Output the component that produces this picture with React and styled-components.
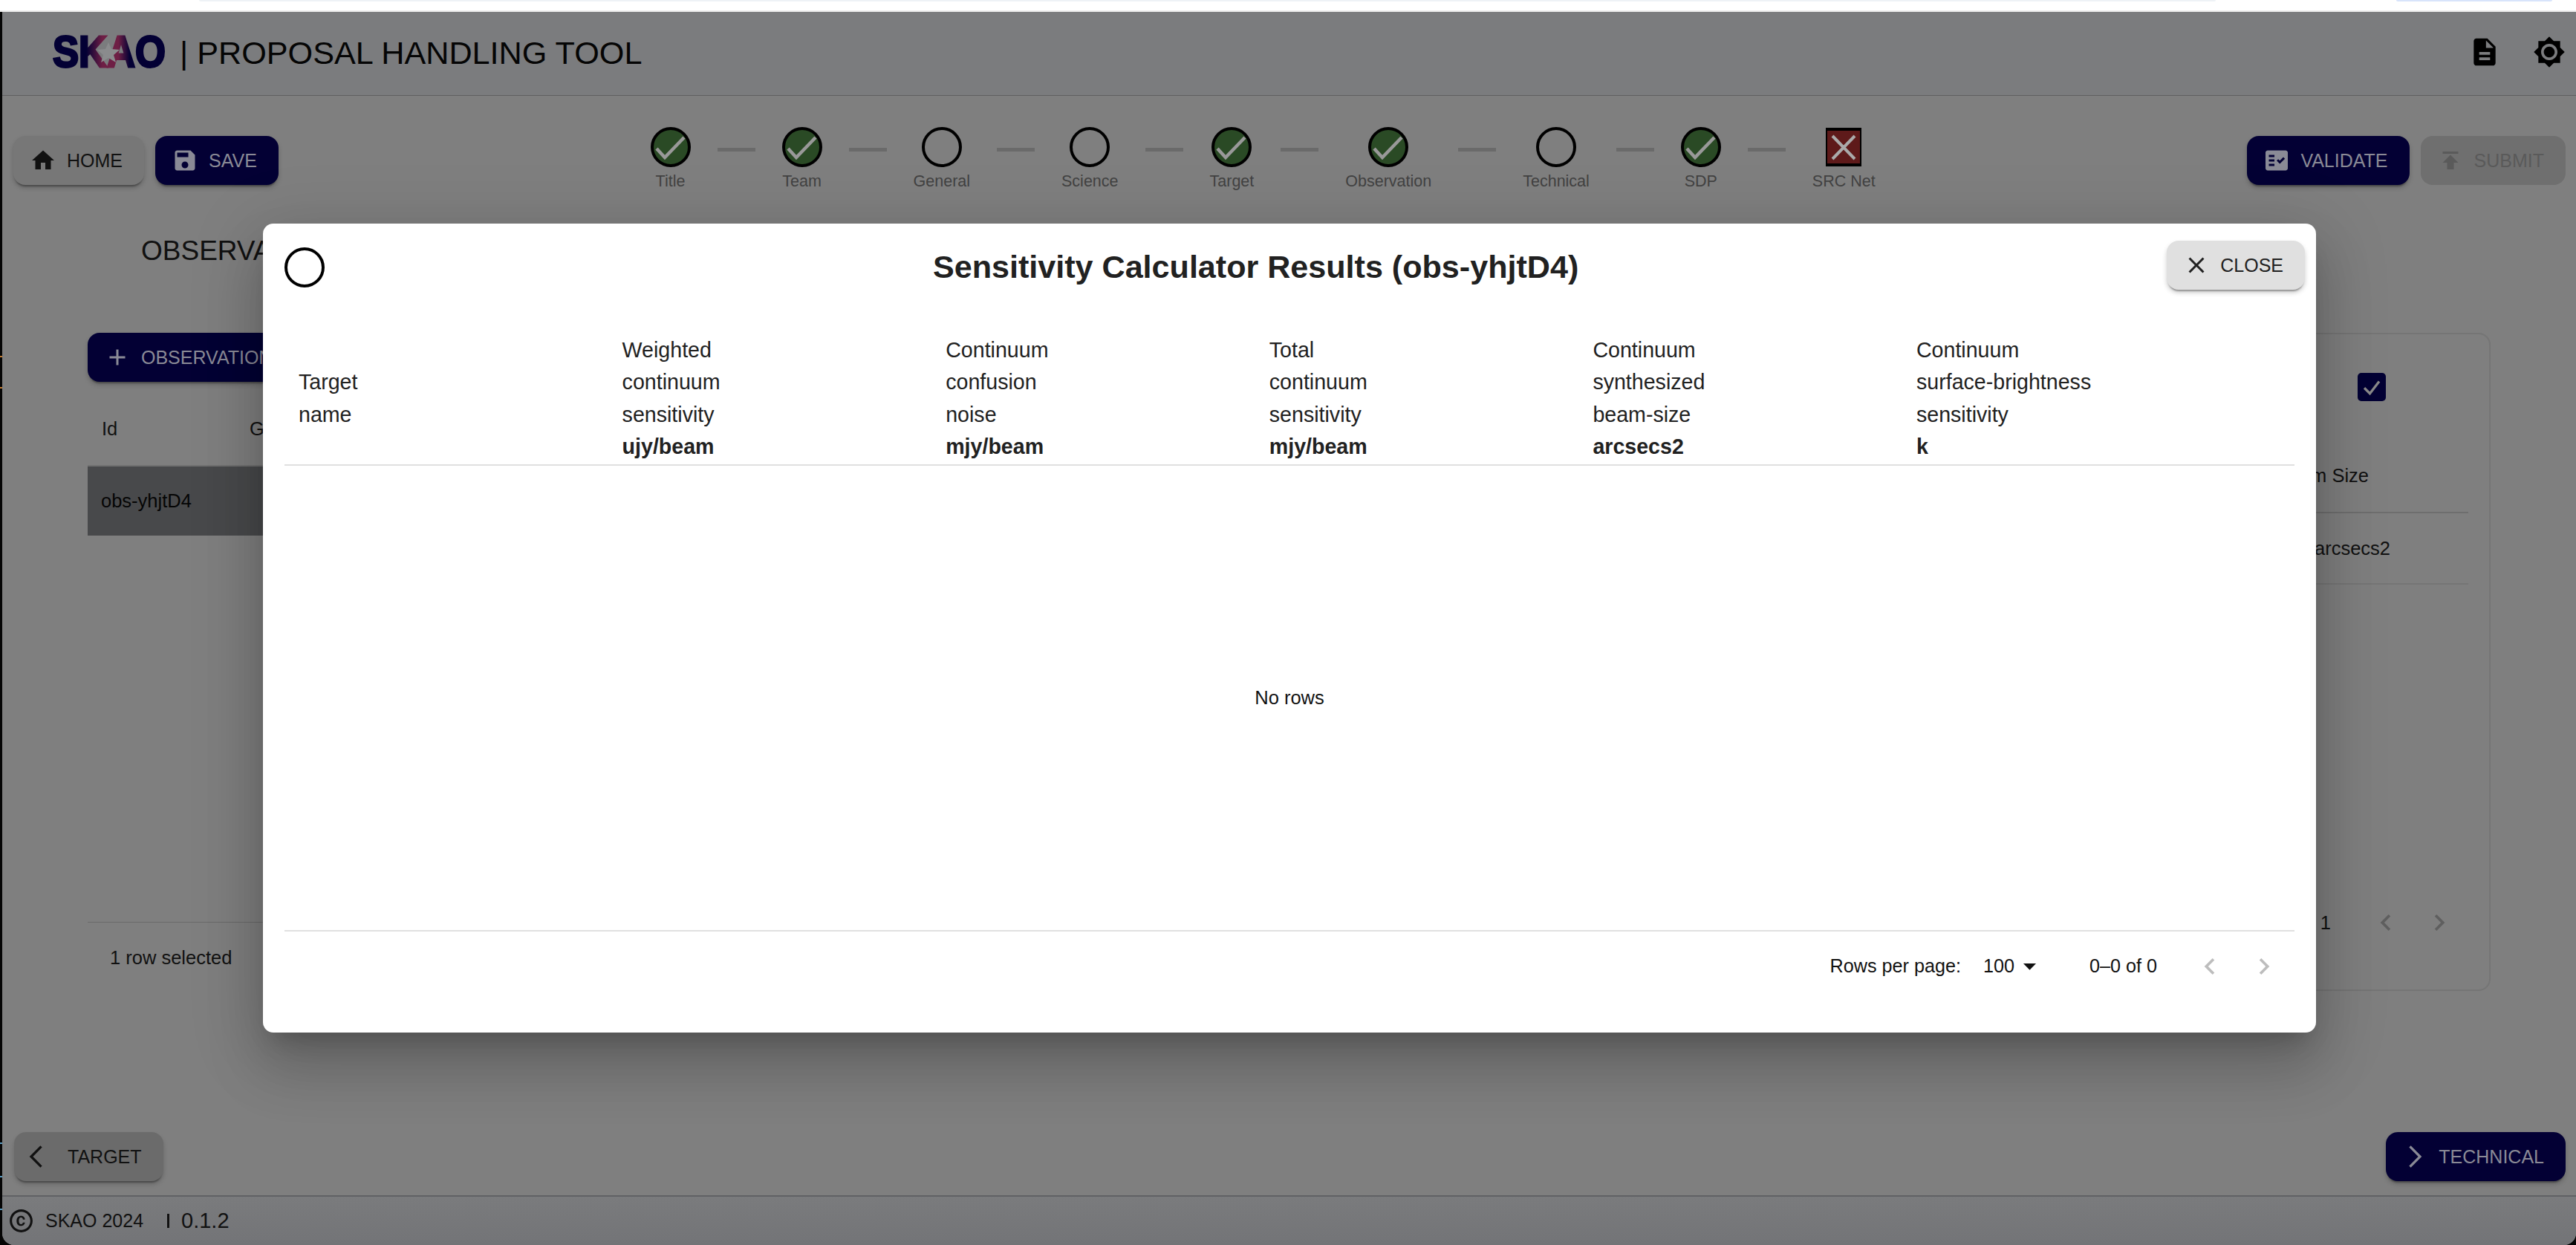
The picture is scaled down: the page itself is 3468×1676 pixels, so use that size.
import React from 'react';
import styled, { createGlobalStyle } from 'styled-components';

const GlobalStyle = createGlobalStyle`
  html, body {
    margin: 0;
    padding: 0;
    background: #000;
  }
  body {
    font-family: "Liberation Sans", Arial, sans-serif;
  }
  * {
    box-sizing: border-box;
  }
`;

const Page = styled.div`
  position: relative;
  width: 3468px;
  height: 1676px;
  display: flex;
  flex-direction: column;
  overflow: hidden;
  background: #050505;
`;

const TopStrip = styled.div`
  flex: none;
  height: 16px;
  display: flex;
  background: #fff;
  border-bottom: 2px solid #ececec;
`;

const TabPill = styled.div`
  height: 2px;
  margin-left: ${({ $offset }) => $offset}px;
  width: ${({ $width }) => $width}px;
  background: ${({ $color }) => $color};
  border-radius: 0 0 4px 4px;
`;

const Desktop = styled.div`
  flex: 1;
  min-height: 0;
  display: flex;
`;

const SideEdge = styled.div`
  flex: none;
  width: 3px;
  display: flex;
  flex-direction: column;
`;

const EdgeTick = styled.div`
  flex: none;
  height: 2px;
  margin-top: ${({ $gap }) => $gap}px;
  background: ${({ $color }) => $color};
`;

const Window = styled.div`
  flex: 1;
  min-width: 0;
  display: flex;
  flex-direction: column;
  background: #7f7f7f;
  border-radius: 0 0 16px 16px;
  overflow: hidden;
`;

const Header = styled.header`
  flex: none;
  height: 113px;
  display: flex;
  align-items: center;
  padding: 0 14px 0 67px;
  background: #7b7c7e;
  border-bottom: 1px solid #5f6061;
`;

const Logo = styled.svg`
  flex: none;
  width: 154px;
  height: 44px;
  margin-top: -6px;
  overflow: visible;
`;

const AppTitle = styled.h1`
  margin: -2px 0 0 18px;
  font-size: 43.2px;
  font-weight: 400;
  line-height: 50px;
  color: #050505;
  white-space: pre;
`;

const HeaderIcons = styled.div`
  margin-left: auto;
  display: flex;
  align-items: center;
  gap: 43px;
  margin-top: -4px;
`;

const Main = styled.main`
  flex: 1;
  min-height: 0;
  display: flex;
  flex-direction: column;
`;

const Toolbar = styled.div`
  flex: none;
  display: flex;
  justify-content: space-between;
  align-items: flex-start;
  padding: 42px 14px 0 15px;
`;

const ButtonGroup = styled.div`
  display: flex;
  gap: 15px;
  margin-top: 12px;
`;

const Button = styled.div`
  flex: none;
  height: 66px;
  display: flex;
  align-items: center;
  gap: ${({ $gap }) => ($gap === undefined ? 14 : $gap)}px;
  padding: 0 29px 0 ${({ $left }) => ($left === undefined ? 22 : $left)}px;
  border-radius: 16px;
  font-size: 25px;
  white-space: nowrap;
  background: ${({ $tone }) => ({
    grey: '#777777',
    dark: '#6b6b6b',
    navy: '#030034',
    light: '#e0e0e0',
    off: '#6f6f6f',
  }[$tone])};
  color: ${({ $tone }) => ({
    grey: '#111111',
    dark: '#111111',
    navy: '#8a8a96',
    light: '#212121',
    off: '#5a5a5a',
  }[$tone])};
  box-shadow: ${({ $tone }) => ($tone === 'off'
    ? 'none'
    : '0 4px 2px -2px rgba(0,0,0,0.3), 0 4px 6px 0 rgba(0,0,0,0.2)')};
`;

const InlineButton = styled(Button)`
  display: inline-flex;
`;

const Stepper = styled.div`
  display: flex;
  align-items: flex-start;
  gap: 36px;
`;

const Step = styled.div`
  display: flex;
  flex-direction: column;
  align-items: center;
`;

const StepLabel = styled.div`
  margin-top: 7px;
  font-size: 21.5px;
  line-height: 25px;
  color: #424242;
`;

const Connector = styled.div`
  flex: none;
  width: 51px;
  height: 5px;
  margin-top: 28px;
  background: #6a6a6a;
`;

const Heading = styled.h2`
  margin: 59px 0 0 187px;
  font-size: 37px;
  font-weight: 400;
  line-height: 44px;
  color: #111;
`;

const Content = styled.div`
  flex: none;
  display: flex;
  justify-content: space-between;
  padding: 88px 115px 0;
`;

const LeftColumn = styled.section`
  width: 2100px;
`;

const DataHead = styled.div`
  height: 81px;
  margin-top: 33px;
  padding-bottom: 18px;
  display: flex;
  align-items: center;
  border-bottom: 2px solid #707070;
  font-size: 25.5px;
  color: #111;
`;

const DataHeadCell = styled.div`
  width: 199px;
  padding-left: 19px;
`;

const DataBody = styled.div`
  height: 614px;
  border-bottom: 1px solid #6a6a6a;
`;

const SelectedRow = styled.div`
  height: 93px;
  padding-left: 18px;
  display: flex;
  align-items: center;
  background: #48494b;
  font-size: 25.5px;
  color: #050505;
`;

const RowCount = styled.div`
  margin-top: 34px;
  padding-left: 30px;
  font-size: 25.5px;
  line-height: 26px;
  color: #111;
`;

const SideCard = styled.section`
  width: 1113px;
  height: 886px;
  padding: 52px 28px 68px;
  display: flex;
  flex-direction: column;
  border: 2px solid #757575;
  border-radius: 16px;
`;

const CheckRow = styled.div`
  display: flex;
  justify-content: flex-end;
  padding-right: 111px;
`;

const Checkbox = styled.div`
  width: 38px;
  height: 38px;
  display: flex;
  align-items: center;
  justify-content: center;
  border-radius: 5px;
  background: #030034;
`;

const CardHead = styled.div`
  height: 151px;
  display: flex;
  align-items: flex-end;
  justify-content: flex-end;
  padding: 0 134px 34px 0;
  border-bottom: 2px solid #6e6e6e;
  font-size: 25.5px;
  line-height: 30px;
  color: #111;
`;

const CardRow = styled.div`
  height: 96px;
  display: flex;
  align-items: center;
  justify-content: flex-end;
  padding-right: 105px;
  border-bottom: 2px solid #757575;
  font-size: 25.5px;
  color: #111;
`;

const CardPager = styled.div`
  margin-top: auto;
  height: 44px;
  display: flex;
  align-items: center;
  justify-content: flex-end;
  gap: 28px;
  padding-right: 17px;
  font-size: 25.5px;
  color: #111;
`;

const PagerCount = styled.span`
  margin-right: 24px;
`;

const NavRow = styled.div`
  margin-top: auto;
  flex: none;
  display: flex;
  justify-content: space-between;
  padding: 0 14px 19px 16px;
`;

const Footer = styled.footer`
  flex: none;
  height: 67px;
  display: flex;
  align-items: center;
  padding-left: 7px;
  background: linear-gradient(#7a7b7d, #737477);
  border-top: 2px solid #606164;
  color: #111;
`;

const Copyright = styled.span`
  margin-left: 14px;
  font-size: 25px;
`;

const Divider = styled.span`
  width: 3px;
  height: 19px;
  margin: 0 16px 0 32px;
  background: #111;
`;

const Version = styled.span`
  font-size: 29px;
`;

const Modal = styled.div`
  position: absolute;
  left: 354px;
  top: 301px;
  width: 2764px;
  height: 1089px;
  display: flex;
  flex-direction: column;
  padding: 0 29px;
  background: #fff;
  border-radius: 14px;
  color: #212121;
  box-shadow: 0 22px 30px -14px rgba(0,0,0,0.2), 0 48px 76px 6px rgba(0,0,0,0.14), 0 18px 92px 16px rgba(0,0,0,0.12);
`;

const ModalHead = styled.div`
  flex: none;
  height: 149px;
  display: flex;
  align-items: flex-start;
  padding-top: 23px;
`;

const StatusRing = styled.div`
  flex: none;
  width: 54px;
  height: 54px;
  margin-top: 9px;
  border: 4px solid #000;
  border-radius: 50%;
`;

const ModalTitle = styled.h2`
  margin: 9px 0 0 819px;
  font-size: 43.1px;
  font-weight: 700;
  line-height: 52px;
  white-space: nowrap;
`;

const CloseSlot = styled.div`
  margin: 0 -14px 0 auto;
`;

const TableHead = styled.div`
  flex: none;
  display: grid;
  grid-template-columns: repeat(6, 435.6px);
  padding-bottom: 1px;
  border-bottom: 2px solid #e0e0e0;
`;

const HeadCell = styled.div`
  align-self: center;
  padding-left: 19px;
  font-size: 28.6px;
  line-height: 43.4px;
`;

const HeadUnit = styled.div`
  font-weight: 700;
`;

const TableBody = styled.div`
  flex: none;
  height: 627px;
  display: flex;
  align-items: center;
  justify-content: center;
  border-bottom: 2px solid #e0e0e0;
  font-size: 25.5px;
  color: #111;
`;

const TablePager = styled.div`
  flex: none;
  height: 94px;
  display: flex;
  align-items: center;
  justify-content: flex-end;
  padding-right: 19px;
  font-size: 25.2px;
  color: #111;
`;

const PageSize = styled.span`
  margin-left: 30px;
`;

const PageRange = styled.span`
  margin: 0 49px 0 60px;
`;

const PageButtons = styled.div`
  display: flex;
  gap: 29px;
`;

const Icon = ({ d, size = 36, color = 'currentColor' }) => (
  <svg width={size} height={size} viewBox="0 0 24 24" fill={color} style={{ flex: 'none' }}>
    <path d={d} />
  </svg>
);

const NavChevron = ({ d, color }) => (
  <svg width="56" height="56" viewBox="0 0 24 24" fill="none" stroke={color} strokeWidth="1.4" style={{ flex: 'none' }}>
    <path d={d} />
  </svg>
);

const paths = {
  home: 'M10 20v-6h4v6h5v-8h3L12 3 2 12h3v8z',
  save: 'M17 3H5c-1.11 0-2 .9-2 2v14c0 1.1.89 2 2 2h14c1.1 0 2-.9 2-2V7l-4-4zm-5 16c-1.66 0-3-1.34-3-3s1.34-3 3-3 3 1.34 3 3-1.34 3-3 3zm3-10H5V5h10v4z',
  factCheck: 'M20 3H4c-1.1 0-2 .9-2 2v14c0 1.1.9 2 2 2h16c1.1 0 2-.9 2-2V5c0-1.1-.9-2-2-2zM10 17H5v-2h5v2zm0-4H5v-2h5v2zm0-4H5V7h5v2zm4.82 6L12 12.16l1.41-1.41 1.41 1.42L17.99 9l1.42 1.42L14.82 15z',
  publish: 'M5 4v2h14V4H5zm0 10h4v6h6v-6h4l-7-7-7 7z',
  close: 'M19 6.41 17.59 5 12 10.59 6.41 5 5 6.41 10.59 12 5 17.59 6.41 19 12 13.41 17.59 19 19 17.59 13.41 12z',
  add: 'M19 13h-6v6h-2v-6H5v-2h6V5h2v6h6v2z',
  left: 'M15.41 7.41 14 6l-6 6 6 6 1.41-1.41L10.83 12z',
  right: 'M10 6 8.59 7.41 13.17 12l-4.58 4.59L10 18l6-6z',
  navLeft: 'M14.8 6.2 9 12l5.8 5.8',
  navRight: 'M9.2 6.2 15 12l-5.8 5.8',
  description: 'M14 2H6c-1.1 0-1.99.9-1.99 2L4 20c0 1.1.89 2 1.99 2H18c1.1 0 2-.9 2-2V8l-6-6zm2 16H8v-2h8v2zm0-4H8v-2h8v2zm-3-5V3.5L18.5 9H13z',
  brightness: 'M20 8.69V4h-4.69L12 .69 8.69 4H4v4.69L.69 12 4 15.31V20h4.69L12 23.31 15.31 20H20v-4.69L23.31 12 20 8.69zM12 18c-3.31 0-6-2.69-6-6s2.69-6 6-6 6 2.69 6 6-2.69 6-6 6zm0-10c-2.21 0-4 1.79-4 4s1.79 4 4 4 4-1.79 4-4-1.79-4-4-4z',
  copyright: 'M11.88 9.14c1.28.06 1.61 1.15 1.63 1.66h1.79c-.08-1.98-1.49-3.19-3.45-3.19C9.64 7.61 8 9 8 12.14c0 1.94.93 4.24 3.84 4.24 2.22 0 3.41-1.65 3.44-2.95h-1.79c-.03.59-.45 1.38-1.63 1.44-1.31-.04-1.86-1.06-1.86-2.73 0-2.89 1.28-2.98 1.88-3zM12 2C6.48 2 2 6.48 2 12s4.48 10 10 10 10-4.48 10-10S17.52 2 12 2zm0 18c-4.41 0-8-3.59-8-8s3.59-8 8-8 8 3.59 8 8-3.59 8-8 8z',
  dropDown: 'M7 10l5 5 5-5z',
};

const StepMark = ({ status }) => {
  if (status === 'error') {
    return (
      <svg width="54" height="54" viewBox="0 0 54 54">
        <rect x="3" y="1" width="48" height="52" fill="#000" />
        <rect x="5" y="5" width="44" height="44" fill="#5e1a1a" />
        <path d="M12 12 42 43M42 12 12 43" stroke="#aaa" strokeWidth="4" fill="none" />
      </svg>
    );
  }
  return (
    <svg width="54" height="54" viewBox="0 0 54 54">
      <circle cx="27" cy="27" r="25" fill={status === 'done' ? '#2a4a25' : 'none'} stroke="#000" strokeWidth="4" />
      {status === 'done' && (
        <path d="M8 29 19 41 45 14" stroke="#999" strokeWidth="4.5" fill="none" />
      )}
    </svg>
  );
};

const steps = [
  { label: 'Title', status: 'done' },
  { label: 'Team', status: 'done' },
  { label: 'General', status: 'open' },
  { label: 'Science', status: 'open' },
  { label: 'Target', status: 'done' },
  { label: 'Observation', status: 'done' },
  { label: 'Technical', status: 'open' },
  { label: 'SDP', status: 'done' },
  { label: 'SRC Net', status: 'error' },
];

const columns = [
  { lines: ['Target', 'name'] },
  { lines: ['Weighted', 'continuum', 'sensitivity'], unit: 'ujy/beam' },
  { lines: ['Continuum', 'confusion', 'noise'], unit: 'mjy/beam' },
  { lines: ['Total', 'continuum', 'sensitivity'], unit: 'mjy/beam' },
  { lines: ['Continuum', 'synthesized', 'beam-size'], unit: 'arcsecs2' },
  { lines: ['Continuum', 'surface-brightness', 'sensitivity'], unit: 'k' },
];

const App = () => (
  <Page>
    <GlobalStyle />
    <TopStrip>
      <TabPill $offset={268} $width={2715} $color="#eef2f6" />
      <TabPill $offset={243} $width={210} $color="#d8e4fb" />
    </TopStrip>
    <Desktop>
      <SideEdge>
        <EdgeTick $gap={463} $color="#c07a30" />
        <EdgeTick $gap={40} $color="#c07a30" />
        <EdgeTick $gap={1015} $color="#5a9ac0" />
        <EdgeTick $gap={43} $color="#5a9ac0" />
        <EdgeTick $gap={42} $color="#5a9ac0" />
      </SideEdge>
      <Window>
        <Header>
          <Logo viewBox="0 0 154 44">
            <defs>
              <linearGradient id="skaoFill" gradientUnits="userSpaceOnUse" x1="0" x2="154" y1="0" y2="0">
                <stop offset="0.3" stopColor="#030034" />
                <stop offset="0.44" stopColor="#6e1f45" />
                <stop offset="0.58" stopColor="#6e1f45" />
                <stop offset="0.68" stopColor="#030034" />
              </linearGradient>
            </defs>
            <text
              x="1"
              y="43"
              fontFamily="'Liberation Sans', Arial, sans-serif"
              fontWeight="700"
              fontSize="60"
              textLength="152"
              lengthAdjust="spacingAndGlyphs"
              fill="url(#skaoFill)"
              stroke="url(#skaoFill)"
              strokeWidth="3"
            >
              SKAO
            </text>
            <polygon
              points="76,10 80,19 91,20 83,27 86,37 76,31 66,37 69,27 61,20 72,19"
              fill="#8a8b8d"
            />
          </Logo>
          <AppTitle>{'| PROPOSAL HANDLING TOOL'}</AppTitle>
          <HeaderIcons>
            <Icon d={paths.description} size={44} color="#000" />
            <Icon d={paths.brightness} size={44} color="#000" />
          </HeaderIcons>
        </Header>
        <Main>
          <Toolbar>
            <ButtonGroup>
              <Button $tone="grey">
                <Icon d={paths.home} color="#111" />
                HOME
              </Button>
              <Button $tone="navy">
                <Icon d={paths.save} />
                SAVE
              </Button>
            </ButtonGroup>
            <Stepper>
              {steps.map((step, index) => (
                <React.Fragment key={step.label}>
                  {index > 0 && <Connector />}
                  <Step>
                    <StepMark status={step.status} />
                    <StepLabel>{step.label}</StepLabel>
                  </Step>
                </React.Fragment>
              ))}
            </Stepper>
            <ButtonGroup>
              <Button $tone="navy">
                <Icon d={paths.factCheck} />
                VALIDATE
              </Button>
              <Button $tone="off">
                <Icon d={paths.publish} />
                SUBMIT
              </Button>
            </ButtonGroup>
          </Toolbar>
          <Heading>OBSERVATIONS</Heading>
          <Content>
            <LeftColumn>
              <InlineButton $tone="navy">
                <Icon d={paths.add} />
                OBSERVATION
              </InlineButton>
              <DataHead>
                <DataHeadCell>Id</DataHeadCell>
                <DataHeadCell>Group</DataHeadCell>
              </DataHead>
              <DataBody>
                <SelectedRow>obs-yhjtD4</SelectedRow>
              </DataBody>
              <RowCount>1 row selected</RowCount>
            </LeftColumn>
            <SideCard>
              <CheckRow>
                <Checkbox>
                  <svg width="30" height="30" viewBox="0 0 24 24" fill="none" stroke="#8a8a8a" strokeWidth="2.6">
                    <path d="M4 13 10 19 20 6" />
                  </svg>
                </Checkbox>
              </CheckRow>
              <CardHead>Beam Size</CardHead>
              <CardRow>arcsecs2</CardRow>
              <CardPager>
                <PagerCount>1 of 1</PagerCount>
                <Icon d={paths.left} size={44} color="#5f5f5f" />
                <Icon d={paths.right} size={44} color="#5f5f5f" />
              </CardPager>
            </SideCard>
          </Content>
          <NavRow>
            <Button $tone="dark" $left={2}>
              <NavChevron d={paths.navLeft} color="#111" />
              TARGET
            </Button>
            <Button $tone="navy" $left={11} $gap={4}>
              <NavChevron d={paths.navRight} color="#8a8a96" />
              TECHNICAL
            </Button>
          </NavRow>
        </Main>
        <Footer>
          <Icon d={paths.copyright} size={37} color="#111" />
          <Copyright>SKAO 2024</Copyright>
          <Divider />
          <Version>0.1.2</Version>
        </Footer>
      </Window>
    </Desktop>
    <Modal>
      <ModalHead>
        <StatusRing />
        <ModalTitle>Sensitivity Calculator Results (obs-yhjtD4)</ModalTitle>
        <CloseSlot>
          <Button $tone="light">
            <Icon d={paths.close} />
            CLOSE
          </Button>
        </CloseSlot>
      </ModalHead>
      <TableHead>
        {columns.map((column) => (
          <HeadCell key={column.lines.join('-')}>
            {column.lines.map((line) => <div key={line}>{line}</div>)}
            {column.unit && <HeadUnit>{column.unit}</HeadUnit>}
          </HeadCell>
        ))}
      </TableHead>
      <TableBody>No rows</TableBody>
      <TablePager>
        <span>Rows per page:</span>
        <PageSize>100</PageSize>
        <Icon d={paths.dropDown} size={41} color="#111" />
        <PageRange>0–0 of 0</PageRange>
        <PageButtons>
          <Icon d={paths.left} size={44} color="#bdbdbd" />
          <Icon d={paths.right} size={44} color="#bdbdbd" />
        </PageButtons>
      </TablePager>
    </Modal>
  </Page>
);

export default App;
